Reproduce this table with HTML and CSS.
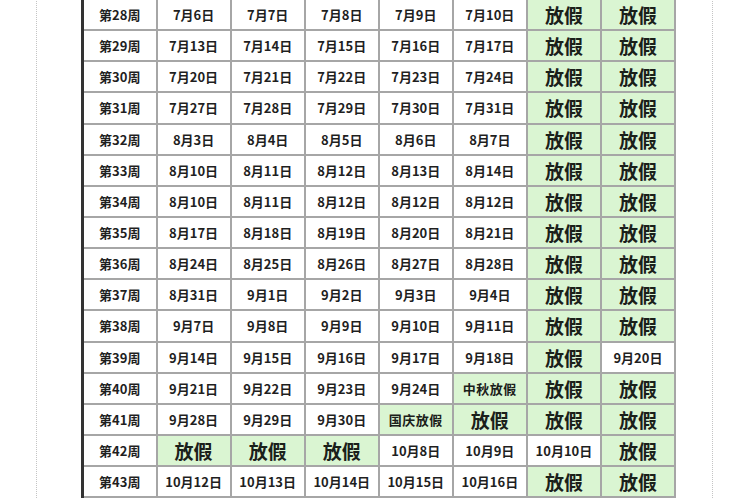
FILE: index.html
```html
<!DOCTYPE html>
<html lang="zh">
<head>
<meta charset="utf-8">
<link rel="stylesheet" href="styles.css">
</head>
<body>
<div class="page">
  <table class="sched">
    <tr><td>第28周</td><td>7月6日</td><td>7月7日</td><td>7月8日</td><td>7月9日</td><td>7月10日</td><td class="off">放假</td><td class="off">放假</td></tr>
    <tr><td>第29周</td><td>7月13日</td><td>7月14日</td><td>7月15日</td><td>7月16日</td><td>7月17日</td><td class="off">放假</td><td class="off">放假</td></tr>
    <tr><td>第30周</td><td>7月20日</td><td>7月21日</td><td>7月22日</td><td>7月23日</td><td>7月24日</td><td class="off">放假</td><td class="off">放假</td></tr>
    <tr><td>第31周</td><td>7月27日</td><td>7月28日</td><td>7月29日</td><td>7月30日</td><td>7月31日</td><td class="off">放假</td><td class="off">放假</td></tr>
    <tr><td>第32周</td><td>8月3日</td><td>8月4日</td><td>8月5日</td><td>8月6日</td><td>8月7日</td><td class="off">放假</td><td class="off">放假</td></tr>
    <tr><td>第33周</td><td>8月10日</td><td>8月11日</td><td>8月12日</td><td>8月13日</td><td>8月14日</td><td class="off">放假</td><td class="off">放假</td></tr>
    <tr><td>第34周</td><td>8月10日</td><td>8月11日</td><td>8月12日</td><td>8月12日</td><td>8月12日</td><td class="off">放假</td><td class="off">放假</td></tr>
    <tr><td>第35周</td><td>8月17日</td><td>8月18日</td><td>8月19日</td><td>8月20日</td><td>8月21日</td><td class="off">放假</td><td class="off">放假</td></tr>
    <tr><td>第36周</td><td>8月24日</td><td>8月25日</td><td>8月26日</td><td>8月27日</td><td>8月28日</td><td class="off">放假</td><td class="off">放假</td></tr>
    <tr><td>第37周</td><td>8月31日</td><td>9月1日</td><td>9月2日</td><td>9月3日</td><td>9月4日</td><td class="off">放假</td><td class="off">放假</td></tr>
    <tr><td>第38周</td><td>9月7日</td><td>9月8日</td><td>9月9日</td><td>9月10日</td><td>9月11日</td><td class="off">放假</td><td class="off">放假</td></tr>
    <tr><td>第39周</td><td>9月14日</td><td>9月15日</td><td>9月16日</td><td>9月17日</td><td>9月18日</td><td class="off">放假</td><td>9月20日</td></tr>
    <tr><td>第40周</td><td>9月21日</td><td>9月22日</td><td>9月23日</td><td>9月24日</td><td class="off fest">中秋放假</td><td class="off">放假</td><td class="off">放假</td></tr>
    <tr><td>第41周</td><td>9月28日</td><td>9月29日</td><td>9月30日</td><td class="off fest">国庆放假</td><td class="off">放假</td><td class="off">放假</td><td class="off">放假</td></tr>
    <tr><td>第42周</td><td class="off">放假</td><td class="off">放假</td><td class="off">放假</td><td>10月8日</td><td>10月9日</td><td>10月10日</td><td class="off">放假</td></tr>
    <tr><td>第43周</td><td>10月12日</td><td>10月13日</td><td>10月14日</td><td>10月15日</td><td>10月16日</td><td class="off">放假</td><td class="off">放假</td></tr>
  </table>
</div>
</body>
</html>
```
FILE: styles.css
```css
html, body {
  margin: 0;
  padding: 0;
  background: #ffffff;
}
body {
  width: 750px;
  height: 500px;
  overflow: hidden;
  font-family: "Noto Sans CJK SC", "Noto Sans", sans-serif;
}
.page {
  margin-left: 36px;
  width: 677px;
  height: 500px;
  border-left: 1px dotted #c4c4c4;
  border-right: 1px dotted #c4c4c4;
  box-sizing: border-box;
  padding-left: 44px;
}
.sched {
  border-collapse: collapse;
  table-layout: fixed;
  width: 595px;
  margin-top: -2px;
  border-left: 3px solid #333;
  border-right: 2px solid #444;
  border-bottom: 2px solid #444;
}
.sched td {
  height: 29.15px;
  padding: 0;
  border: 2px solid #a6a6a6;
  text-align: center;
  vertical-align: middle;
  font-size: 13px;
  font-weight: 700;
  color: #1f1f1f;
  white-space: nowrap;
  line-height: 1;
}
.sched td.off {
  background: #daf5d2;
  font-size: 19px;
  color: #1a201a;
}
.sched td.fest {
  font-size: 13px;
  letter-spacing: 0.5px;
}
```
